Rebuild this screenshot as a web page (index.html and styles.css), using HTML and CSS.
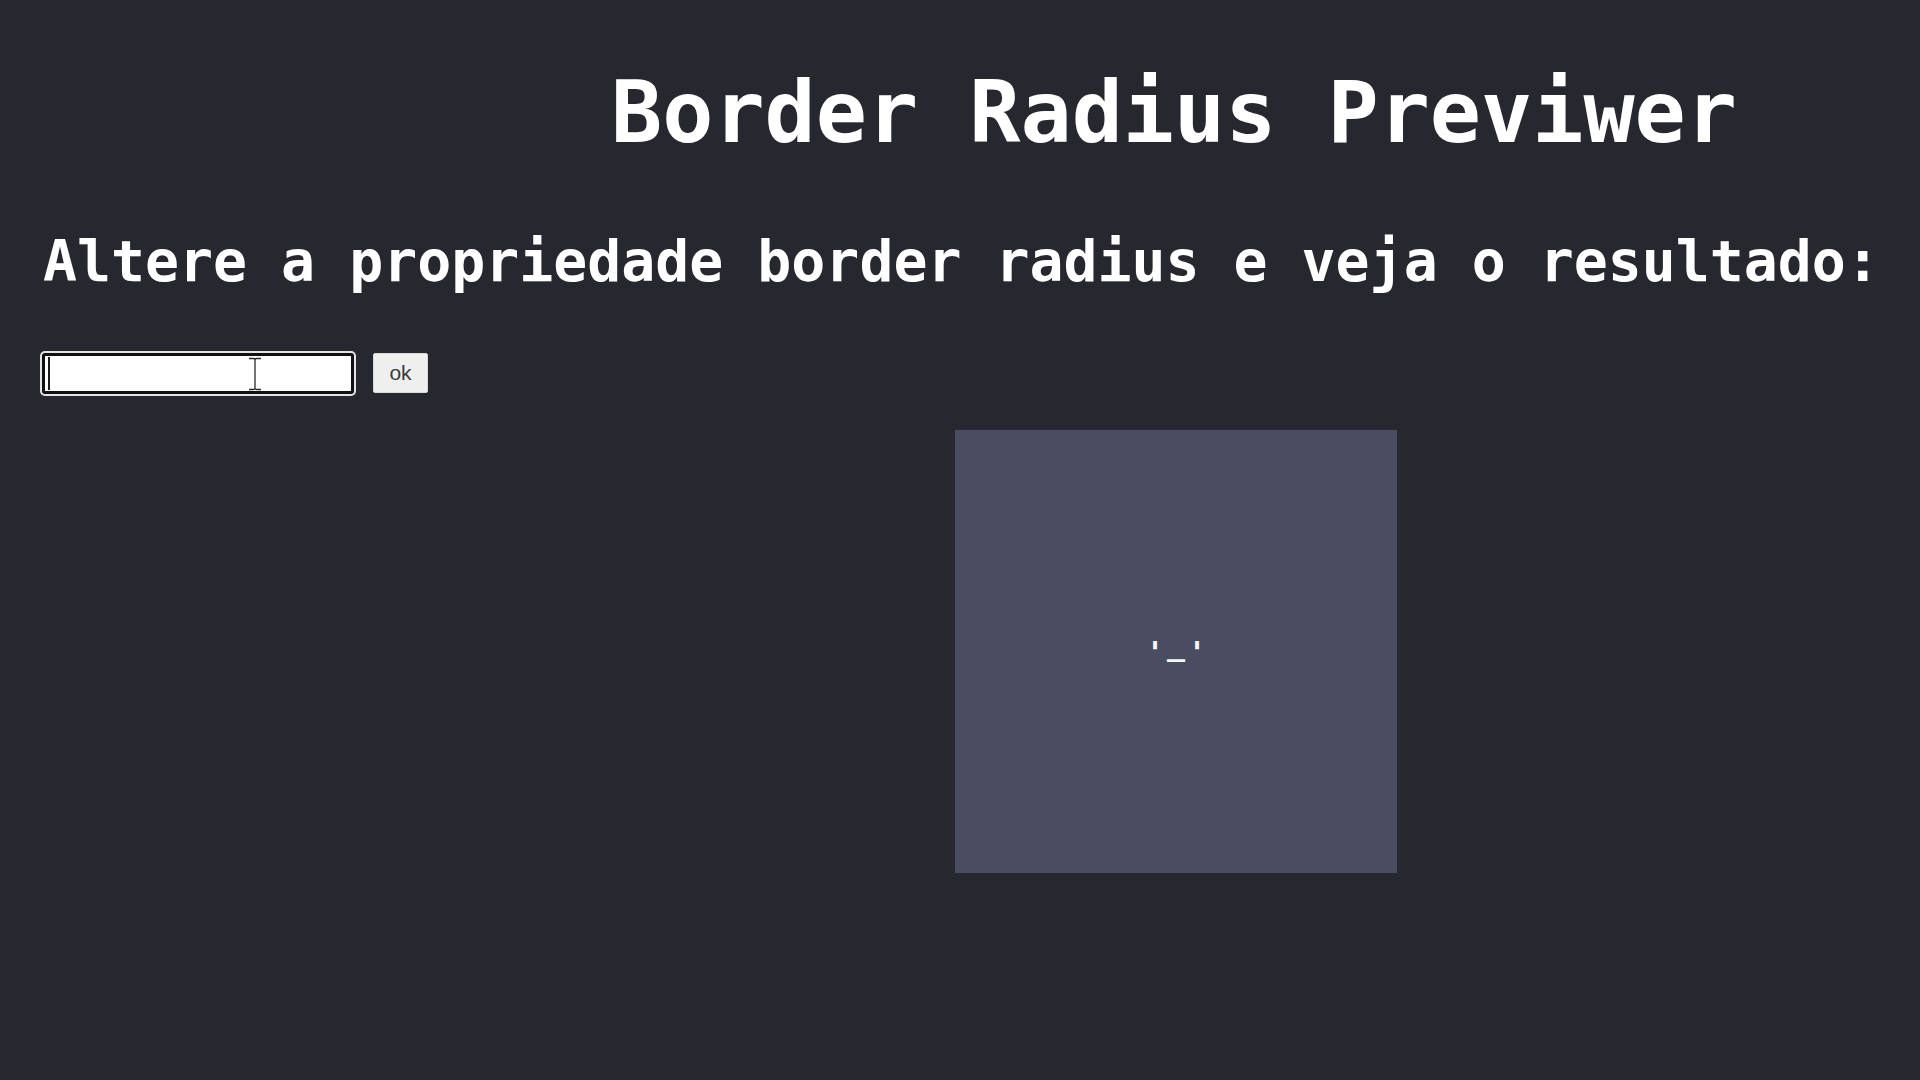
FILE: index.html
```html
<!DOCTYPE html>
<html lang="pt-BR">
<head>
<meta charset="utf-8">
<title>Border Radius Previwer</title>
<link rel="stylesheet" href="styles.css">
</head>
<body>
  <main class="page">
    <h1 class="title">Border Radius Previwer</h1>
    <h2 class="subtitle">Altere a propriedade border radius e veja o resultado:</h2>
    <div class="controls">
      <div class="field">
        <input class="radius-input" type="text" aria-label="border radius">
        <span class="caret"></span>
        <svg class="ibeam" width="14" height="34" viewBox="0 0 14 34" aria-hidden="true">
          <path d="M1 1.5h4.5c0.8 0 1.3 0.5 1.5 1c0.2-0.5 0.7-1 1.5-1H13M7 2.5v29M1 32.5h4.5c0.8 0 1.3-0.5 1.5-1c0.2 0.5 0.7 1 1.5 1H13" fill="none" stroke="#ffffff" stroke-width="3"/>
          <path d="M1 1.5h4.5c0.8 0 1.3 0.5 1.5 1c0.2-0.5 0.7-1 1.5-1H13M7 2.5v29M1 32.5h4.5c0.8 0 1.3-0.5 1.5-1c0.2 0.5 0.7 1 1.5 1H13" fill="none" stroke="#2a2a2a" stroke-width="1.3"/>
        </svg>
      </div>
      <button class="ok-button" type="button">ok</button>
    </div>
    <div class="preview">
      <div class="box"><span class="face">'<span class="mouth">_</span>'</span></div>
    </div>
  </main>
</body>
</html>
```

FILE: styles.css
```css
html, body {
  margin: 0;
  padding: 0;
  height: 100%;
}

body {
  background: #27282f;
  color: #f8f8f2;
  font-family: "DejaVu Sans Mono", "Liberation Mono", monospace;
  overflow: hidden;
}

.page {
  display: flex;
  flex-direction: column;
}

.title {
  margin: 63px 0 0 0;
  padding-left: 428px;
  font-size: 85px;
  line-height: 100px;
  font-weight: bold;
  text-align: center;
  color: #ffffff;
  white-space: nowrap;
}

.subtitle {
  margin: 66px 0 0 0;
  padding-left: 43px;
  font-size: 56.5px;
  line-height: 66px;
  font-weight: bold;
  color: #ffffff;
  white-space: nowrap;
}

.controls {
  display: flex;
  align-items: flex-start;
  margin-top: 58px;
  padding-left: 42px;
}

.field {
  position: relative;
  width: 312px;
  height: 41px;
}

.radius-input {
  box-sizing: border-box;
  width: 312px;
  height: 41px;
  margin: 0;
  padding: 0 6px;
  border: 3px solid #111111;
  border-radius: 3px;
  background: #ffffff;
  box-shadow: 0 0 0 2px #e4e4e4;
  outline: none;
  font-family: "Liberation Sans", Arial, sans-serif;
  font-size: 20px;
}

.caret {
  position: absolute;
  left: 6px;
  top: 4px;
  width: 2px;
  height: 33px;
  background: #1a1a1a;
}

.ibeam {
  position: absolute;
  left: 206px;
  top: 4px;
}

.ok-button {
  box-sizing: border-box;
  width: 55px;
  height: 40px;
  margin: 0 0 0 19px;
  padding: 0;
  border: 1px solid #d8d8d8;
  border-radius: 2px;
  background: #efefef;
  color: #3a3a3a;
  font-family: "Liberation Sans", Arial, sans-serif;
  font-size: 21px;
  line-height: 38px;
  text-align: center;
}

.preview {
  display: flex;
  margin-top: 36px;
  padding-left: 955px;
}

.box {
  width: 442px;
  height: 443px;
  background: #4a4c62;
  display: flex;
  align-items: center;
  justify-content: center;
}

.face {
  display: block;
  font-family: "DejaVu Sans Mono", monospace;
  font-weight: bold;
  font-size: 30px;
  line-height: 30px;
  letter-spacing: 3px;
  padding-left: 3px;
  color: #f8f8f2;
  margin-top: 2px;
}

.mouth {
  vertical-align: 8px;
  line-height: 0;
}
```
